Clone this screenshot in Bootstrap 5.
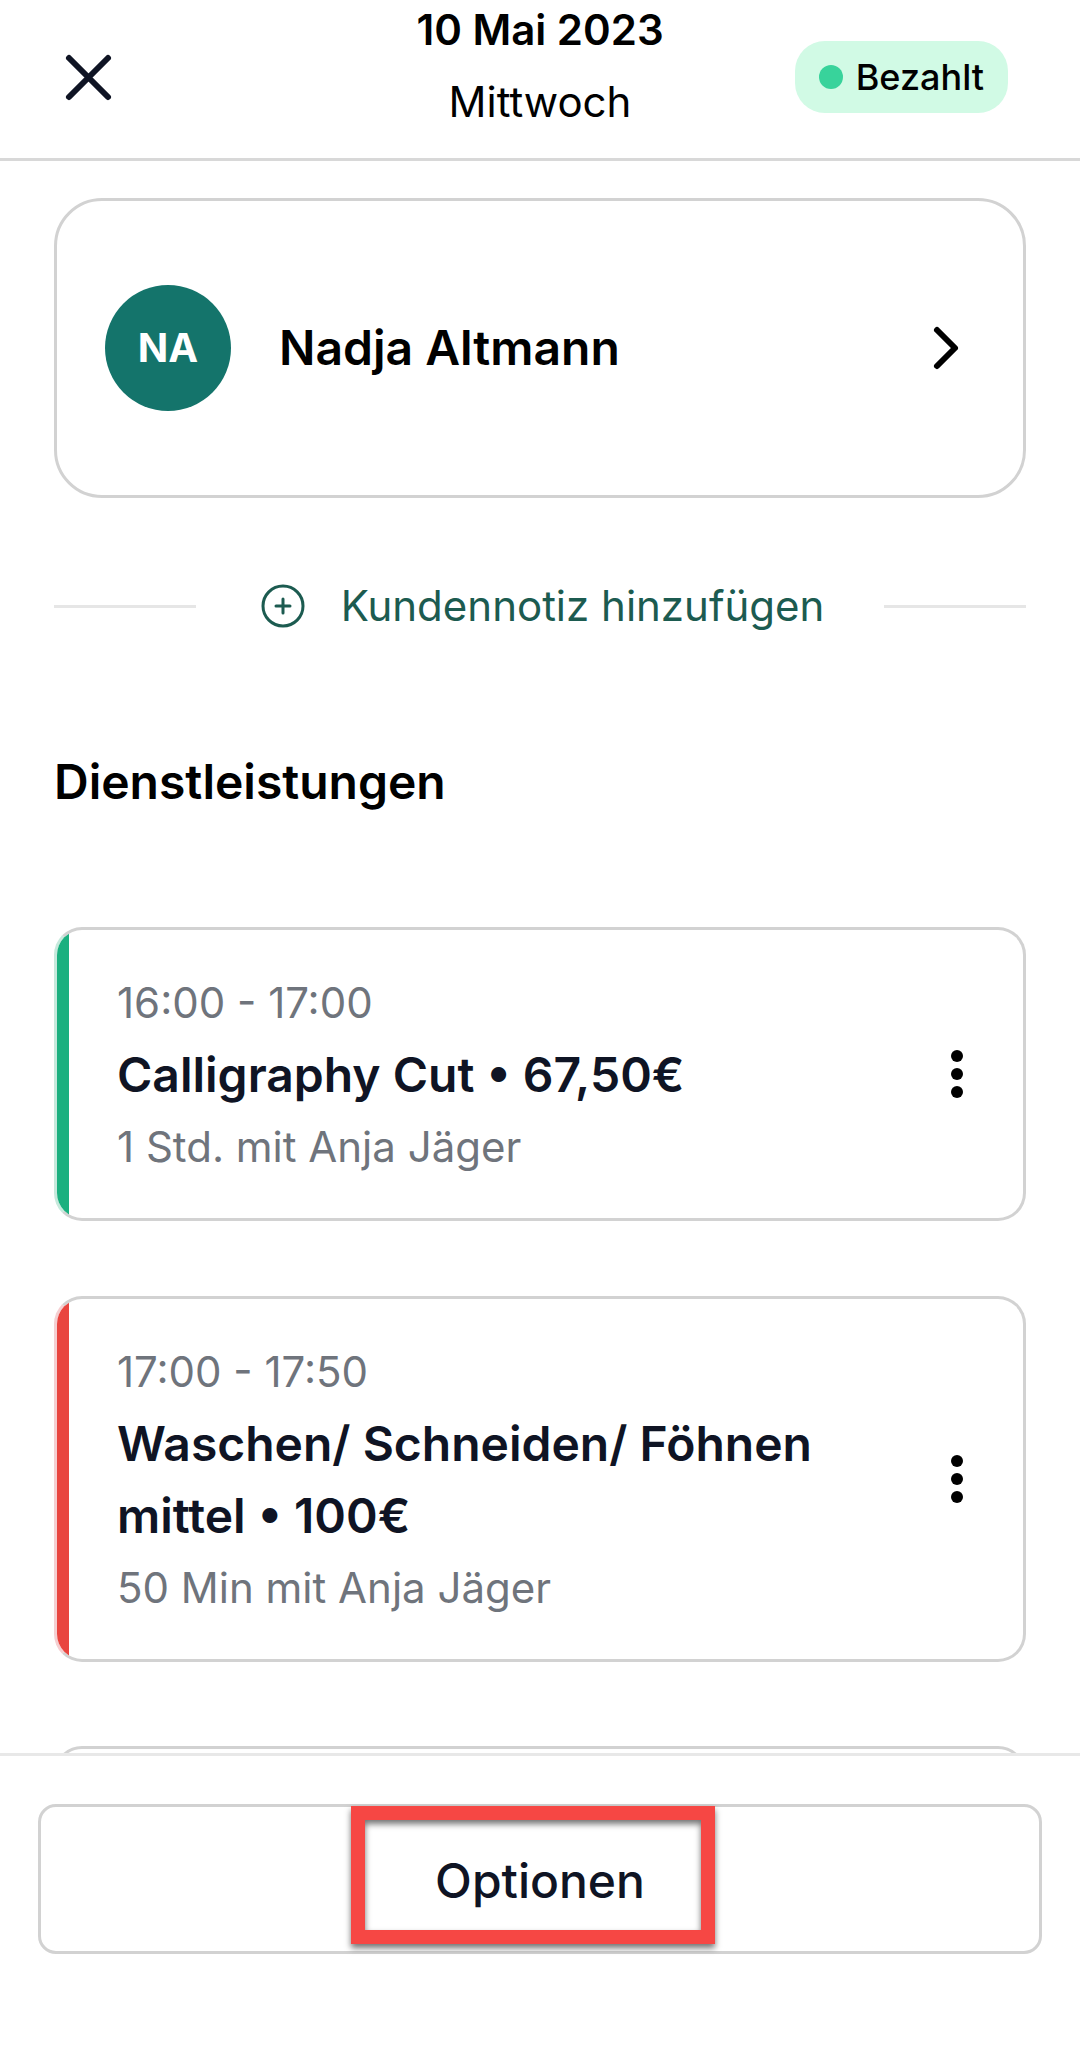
<!DOCTYPE html>
<html lang="de">
<head>
<meta charset="utf-8">
<meta name="viewport" content="width=device-width, initial-scale=1">
<title>Termin – 10 Mai 2023</title>
<link rel="stylesheet" href="https://cdn.jsdelivr.net/npm/bootstrap@5.3.0/dist/css/bootstrap.min.css">
<style>
  body { font-family: Inter, "Liberation Sans", sans-serif; font-size: 42px; line-height: 60px; color: #000; background: #fff; }
  .topbar { display: grid; grid-template-columns: 1fr auto 1fr; padding: 0 72px 26px; border-bottom: 3px solid #d8d8d8; }
  .topbar-side { margin-top: 22px; }
  .icon-btn { color: #0f1424; line-height: 0; margin-left: -12px; }
  .day-title { font-size: 42px; line-height: 60px; font-weight: 600; margin-bottom: 12px; }
  .status { height: 72px; padding: 0 24px; gap: 13px; border-radius: 30px; background: #d1fae5; font-size: 36px; font-weight: 500; }
  .status-dot { width: 24px; height: 24px; background: #38d39b; }
  .content { padding: 37px 54px 0; }
  .outlined { border: 3px solid #d2d2d2; background: #fff; }
  .client { height: 300px; padding: 0 45px 0 48px; gap: 48px; border-radius: 48px; color: #000; }
  .avatar { width: 126px; height: 126px; background: #14746b; font-size: 40px; font-weight: 700; }
  .big { font-size: 48px; line-height: 72px; font-weight: 600; }
  .note-row { margin-top: 78px; }
  .rule { height: 3px; background: #e6e6e6; }
  .note-btn { padding: 0 60px; gap: 31px; font-size: 42px; line-height: 60px; color: #1c5b50; }
  .section-title { margin: 110px 0 109px; }
  .service { border-radius: 28px; min-height: 294px; margin-bottom: 75px; }
  .service + .service { margin-bottom: 84px; }
  .service-red + .service { margin-top: 84px; }
  .service-red { margin-bottom: 0; }
  .stripe { width: 12px; }
  .service-green { border-left-color: #c6e9dc; }
  .service-green .stripe { background: #1bb07f; }
  .service-red { border-left-color: #f5cfd1; }
  .service-red .stripe { background: #e9453f; }
  .service-body { padding: 37px 48px 35px; line-height: 72px; color: #6f747c; }
  .service-body .big { color: #0f1424; }
  .menu-btn { width: 132px; color: #000; line-height: 0; }
  .bottombar { border-top: 3px solid #e8e8e8; padding: 48px 38px 91px; background: #fff; }
  .options-btn { height: 150px; border-radius: 18px; padding: 8px 0 4px; font-size: 48px; font-weight: 500; color: #0f1424; }
  .highlight { left: 351px; right: 365px; top: 50px; height: 138px; border: 14px solid #f64744; filter: drop-shadow(0 4px 3px rgba(0,0,0,.55)); pointer-events: none; }
</style>
<script src="https://cdn.jsdelivr.net/npm/bootstrap@5.3.0/dist/js/bootstrap.bundle.min.js" defer></script>
</head>
<body class="d-flex flex-column vh-100 overflow-hidden">

<header class="topbar flex-shrink-0">
  <div class="topbar-side">
    <button type="button" class="btn p-0 border-0 icon-btn" aria-label="Schließen">
      <svg width="58" height="110" viewBox="0 0 58 110" fill="none" stroke="currentColor" stroke-width="6" stroke-linecap="round"><path d="M9 36 48 75M48 36 9 75"/></svg>
    </button>
  </div>
  <div class="text-center">
    <h1 class="day-title">10 Mai 2023</h1>
    <div>Mittwoch</div>
  </div>
  <div class="topbar-side d-flex justify-content-end align-items-center">
    <span class="status d-inline-flex align-items-center"><span class="status-dot rounded-circle"></span>Bezahlt</span>
  </div>
</header>

<main class="content flex-fill overflow-hidden">
  <a href="#kunde" class="client outlined d-flex align-items-center text-decoration-none">
    <span class="avatar rounded-circle text-white d-flex align-items-center justify-content-center flex-shrink-0">NA</span>
    <span class="big flex-fill">Nadja Altmann</span>
    <svg width="54" height="54" viewBox="0 0 54 54" fill="none" stroke="currentColor" stroke-width="6" stroke-linecap="round" stroke-linejoin="round"><path d="M13 9 31 27 13 45"/></svg>
  </a>

  <div class="note-row d-flex align-items-center">
    <span class="rule flex-fill"></span>
    <button type="button" class="btn border-0 note-btn d-flex align-items-center">
      <svg width="54" height="54" viewBox="0 0 54 54" fill="none" stroke="currentColor" stroke-width="3" stroke-linecap="round"><circle cx="27" cy="27" r="20"/><path d="M27 20V34M20 27H34"/></svg>
      Kundennotiz hinzufügen
    </button>
    <span class="rule flex-fill"></span>
  </div>

  <h2 class="section-title big">Dienstleistungen</h2>

  <article class="service service-green outlined d-flex overflow-hidden">
    <span class="stripe flex-shrink-0"></span>
    <div class="service-body flex-fill">
      <div>16:00 - 17:00</div>
      <h3 class="big m-0">Calligraphy Cut • 67,50€</h3>
      <div>1 Std. mit Anja Jäger</div>
    </div>
    <button type="button" class="btn border-0 p-0 menu-btn flex-shrink-0" aria-label="Mehr">
      <svg width="12" height="48" viewBox="0 0 12 48" fill="currentColor"><circle cx="6" cy="6" r="6"/><circle cx="6" cy="24" r="6"/><circle cx="6" cy="42" r="6"/></svg>
    </button>
  </article>

  <article class="service service-red outlined d-flex overflow-hidden">
    <span class="stripe flex-shrink-0"></span>
    <div class="service-body flex-fill">
      <div>17:00 - 17:50</div>
      <h3 class="big m-0">Waschen/ Schneiden/ Föhnen mittel • 100€</h3>
      <div>50 Min mit Anja Jäger</div>
    </div>
    <button type="button" class="btn border-0 p-0 menu-btn flex-shrink-0" aria-label="Mehr">
      <svg width="12" height="48" viewBox="0 0 12 48" fill="currentColor"><circle cx="6" cy="6" r="6"/><circle cx="6" cy="24" r="6"/><circle cx="6" cy="42" r="6"/></svg>
    </button>
  </article>

  <article class="service outlined"></article>
</main>

<footer class="bottombar flex-shrink-0 position-relative">
  <button type="button" class="btn options-btn outlined w-100">Optionen</button>
  <div class="highlight position-absolute"></div>
</footer>

</body>
</html>
